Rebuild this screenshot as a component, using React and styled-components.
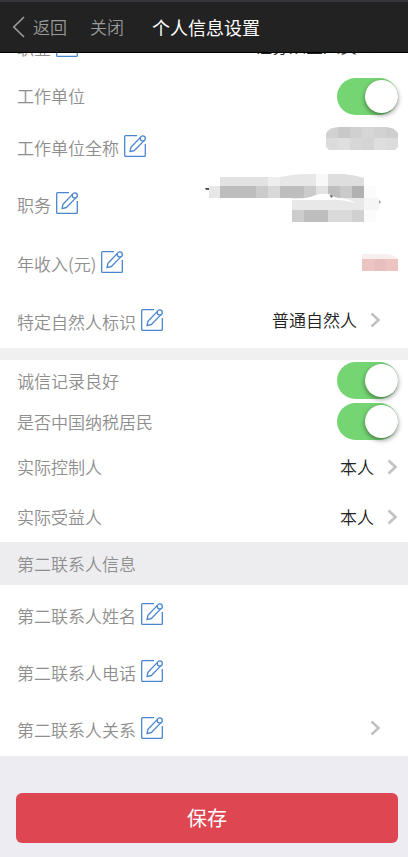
import React from "react";
import styled, {createGlobalStyle} from "styled-components";

const GlobalStyle=createGlobalStyle`
    *{
        box-sizing: border-box;
    }
    body{
        margin:0;
        background-color: #edecf2;
        font-family: "Noto Sans CJK SC", "Noto Sans", sans-serif;
        font-size: 17px;
        line-height: 24px;
    }
    button{
        padding:0;
        border: none;
        background: none;
        font: inherit;
        color: inherit;
        cursor: pointer;
    }
    svg{
        display: block;
        flex: none;
    }
`

const Header=styled.header`
    display: flex;
    align-items: center;
    height: 53px;
    padding: 0 12px;
    border-top: 2px solid #35353b;
    border-bottom: 1px solid #000;
    background-color: #222;
    color: #999;
    font-weight: 350;
    h1{
        margin:0;
        color: #fff;
        font-size: 18px;
        font-weight: 400;
    }
`

const NavButton=styled.button`
    display: flex;
    align-items: center;
    gap: 8px;
    margin-right: ${({$gap})=>$gap}px;
`

const Form=styled.form`
    overflow: hidden;
`

const Group=styled.section`
    background-color: #fff;
    border-top: ${({$divided})=>$divided ? "12px solid #f0f0f0" : "none"};
`

const ScrolledGroup=styled(Group)`
    margin-top: -35px;
`

const GroupTitle=styled.h2`
    display: flex;
    align-items: center;
    height: 43px;
    margin:0;
    padding: 0 17px;
    background-color: #ededf0;
    color: #8e8e8e;
    font-size: 17px;
    font-weight: 350;
`

const RowStyle=styled.div`
    display: flex;
    align-items: center;
    justify-content: space-between;
    height: ${({$height})=>$height}px;
    padding-left: 17px;
    padding-right: ${({$inset})=>$inset ? 27 : 10}px;
`

const Field=styled.div`
    display: flex;
    align-items: center;
    gap: 5px;
    color: #8e8e8e;
    font-weight: 350;
    label, span{
        padding-top: ${({$editable})=>$editable ? 4 : 0}px;
    }
`

const EditButton=styled.button`
    color: #4a86d0;
`

const Picker=styled.button`
    display: flex;
    align-items: center;
    gap: 13px;
    color: #222;
    font-weight: 350;
`

const Switch=styled.input`
    appearance: none;
    display: flex;
    align-items: center;
    justify-content: flex-start;
    width: 61px;
    height: 37px;
    margin:0;
    border-radius: 19px;
    background-color: #ddd;
    cursor: pointer;
    &:checked{
        justify-content: flex-end;
        background-color: #75d573;
    }
    &::before{
        content: '';
        width: 33px;
        height: 33px;
        border-radius: 50%;
        background-color: #fff;
        box-shadow: 0 2px 5px rgba(0,0,0,0.45);
    }
`

const Footer=styled.footer`
    padding: 37px 10px 14px 16px;
`

const SaveButton=styled.button`
    width: 100%;
    height: 50px;
    border-radius: 6px;
    background-color: #de4751;
    color: #fff;
    font-size: 20px;
`

const BackIcon=()=>(
    <svg width="13" height="22" viewBox="0 0 13 22" fill="none" stroke="#999" strokeWidth="1.7">
        <path d="M12 1 L1.8 11 L12 21" />
    </svg>
)

const ArrowIcon=()=>(
    <svg width="11" height="16" viewBox="0 0 11 16" fill="none" stroke="#c2c2c2" strokeWidth="2.6">
        <path d="M1.5 1.5 L8.5 8 L1.5 14.5" />
    </svg>
)

const EditIcon=()=>(
    <svg width="22" height="22" viewBox="0 0 22 22" fill="none" stroke="currentColor" strokeWidth="1.3" strokeLinejoin="round">
        <path d="M13 .7 H1.6 Q.7 .7 .7 1.6 V20.4 Q.7 21.3 1.6 21.3 H20.4 Q21.3 21.3 21.3 20.4 V9" />
        <path d="M6 16.6 L7 12.2 L16.4 2.4 L19.8 5.9 L10.4 15.5 Z" />
        <circle cx="18.8" cy="3.4" r="2.5" fill="#fff" />
    </svg>
)

// [x, y, width, height, grey level]
const postCells=[
    [4,12,11,12,"#e7e7e7"],
    [15,3,48,9,"#e2e2e2"],[63,3,12,9,"#eee"],
    [15,12,36,12,"#bdbdbd"],[51,12,12,12,"#cbcbcb"],[63,12,12,12,"#d8d8d8"],
    [75,12,24,12,"#bebebe"],[99,12,12,12,"#cbcbcb"],[111,12,12,12,"#e2e2e2"],
    [123,12,12,12,"#bebebe"],[135,12,12,12,"#cacaca"],[147,12,12,12,"#b1b1b1"],
    [159,12,12,36,"#fbfbfb"],
    [87,24,72,12,"#e8e8e8"],[159,24,15,12,"#f5f5f5"],
    [87,36,12,12,"#cdcdcd"],[99,36,24,12,"#bebebe"],[123,36,24,12,"#dadada"],[147,36,12,12,"#d0d0d0"],
]

const companyCells=["#d1d1d1","#c8c8c8","#d0d0d0","#d6d6d6","#d2d2d2","#cecece","#dbdbdb","#dfdfdf","#d7d7d7","#d4d4d4","#dedede","#dbdbdb"]

const CompanyMask=()=>(
    <svg width="72" height="38" viewBox="0 0 72 38">
        <clipPath id="company-shape"><path d="M0 6 Q4 0 13 0 H59 Q68 0 72 6 V20 L69 23 H3 L0 20 Z" /></clipPath>
        <g clipPath="url(#company-shape)" shapeRendering="crispEdges">
            {companyCells.map((fill,i)=>(
                <rect key={i} x={(i%6)*12} y={i<6 ? 0 : 11} width="12" height={i<6 ? 11 : 12} fill={fill} />
            ))}
        </g>
    </svg>
)

const PostMask=()=>(
    <svg width="176" height="58" viewBox="0 0 176 58">
        <path d="M75 3 L87 1 L99 0 H111 V12 H75 Z" fill="#e7e7e7" />
        <path d="M111 0 H123 V12 H111 Z" fill="#f8f8f8" />
        <path d="M123 0 H138 Q150 1 159 4 V12 H123 Z" fill="#dedede" />
        {postCells.map(([x,y,w,h,fill],i)=>(
            <rect key={i} x={x} y={y} width={w} height={h} fill={fill} shapeRendering="crispEdges" />
        ))}
        <path d="M87 25 Q102 25 111 21 Q117 19 124 20 Q127 23 135 24 Q145 25 150 29 Q143 27 135 26 L87 26 Z" fill="#fff" />
        <path d="M0 14 H4 V16 H1 Z M125 21 L128 22 L126 24 Z" fill="#555" />
        <path d="M174 26 L176 28 L174 30 Z" fill="#999" />
    </svg>
)

const IncomeMask=()=>(
    <svg width="36" height="17" viewBox="0 0 36 17">
        <path d="M0 0 H25 Q33 1 36 5 H0 Z" fill="#f9eeee" />
        <path d="M0 5 H36 V17 H0 Z" fill="#edc4c2" />
        <path d="M12 5 H24 V17 H12 Z" fill="#e9bfbd" />
    </svg>
)

const EditRow=({name, height=56, inset, children})=>(
    <RowStyle $height={height} $inset={inset}>
        <Field $editable>
            <span>{name}</span>
            <EditButton type="button" aria-label={`编辑${name}`}><EditIcon /></EditButton>
        </Field>
        {children}
    </RowStyle>
)

const PickRow=({name, value})=>(
    <RowStyle $height={50}>
        <Field><span>{name}</span></Field>
        <Picker type="button" aria-label={`${name} ${value}`}>{value}<ArrowIcon /></Picker>
    </RowStyle>
)

const SwitchRow=({id, name, height=41})=>(
    <RowStyle $height={height}>
        <Field><label htmlFor={id}>{name}</label></Field>
        <Switch id={id} type="checkbox" defaultChecked />
    </RowStyle>
)

const App = ()=>{
    return(
        <>
        <GlobalStyle />
        <Header>
            <NavButton type="button" $gap={23}><BackIcon />返回</NavButton>
            <NavButton type="button" $gap={28}>关闭</NavButton>
            <h1>个人信息设置</h1>
        </Header>
        <Form onSubmit={(e)=>e.preventDefault()}>
            <ScrolledGroup>
                <EditRow name="职业" inset>
                    <Picker type="button">证券从业人员<ArrowIcon /></Picker>
                </EditRow>
                <SwitchRow id="company" name="工作单位" height={44} />
                <EditRow name="工作单位全称"><CompanyMask /></EditRow>
                <EditRow name="职务" height={58} inset><PostMask /></EditRow>
                <EditRow name="年收入(元)" height={60}><IncomeMask /></EditRow>
                <EditRow name="特定自然人标识" inset>
                    <Picker type="button">普通自然人<ArrowIcon /></Picker>
                </EditRow>
            </ScrolledGroup>
            <Group $divided>
                <SwitchRow id="credit" name="诚信记录良好" />
                <SwitchRow id="tax" name="是否中国纳税居民" />
                <PickRow name="实际控制人" value="本人" />
                <PickRow name="实际受益人" value="本人" />
            </Group>
            <Group>
                <GroupTitle>第二联系人信息</GroupTitle>
                <EditRow name="第二联系人姓名" height={57} />
                <EditRow name="第二联系人电话" height={57} />
                <EditRow name="第二联系人关系" height={57} inset>
                    <Picker type="button" aria-label="选择第二联系人关系"><ArrowIcon /></Picker>
                </EditRow>
            </Group>
            <Footer>
                <SaveButton type="submit">保存</SaveButton>
            </Footer>
        </Form>
        </>
    )
}

export default App
